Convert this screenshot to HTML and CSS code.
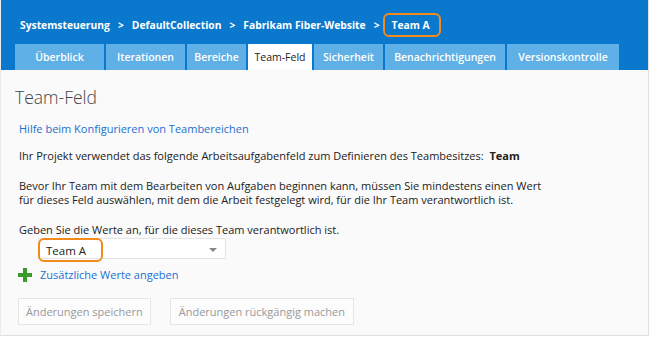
FILE: index.html
```html
<!DOCTYPE html>
<html lang="de">
<head>
  <meta charset="UTF-8">
  <title>Team-Feld</title>
  <link rel="stylesheet" href="styles.css">
</head>
<body>
  <div class="frame">
    <div class="header">
      <div class="breadcrumb">
        <span>Systemsteuerung</span>
        <span class="sep">&gt;</span>
        <span>DefaultCollection</span>
        <span class="sep">&gt;</span>
        <span>Fabrikam Fiber-Website</span>
        <span class="sep">&gt;</span>
        <span class="highlight crumb-team">Team A</span>
      </div>
      <div class="tabs">
        <div class="tab">Überblick</div>
        <div class="tab">Iterationen</div>
        <div class="tab">Bereiche</div>
        <div class="tab active">Team-Feld</div>
        <div class="tab">Sicherheit</div>
        <div class="tab">Benachrichtigungen</div>
        <div class="tab">Versionskontrolle</div>
      </div>
    </div>

    <div class="content">
      <h1 class="page-title">Team-Feld</h1>
      <a href="#" class="help-link">Hilfe beim Konfigurieren von Teambereichen</a>

      <p class="text">Ihr Projekt verwendet das folgende Arbeitsaufgabenfeld zum Definieren des Teambesitzes:&nbsp; <strong>Team</strong></p>

      <p class="text">Bevor Ihr Team mit dem Bearbeiten von Aufgaben beginnen kann, müssen Sie mindestens einen Wert<br>für dieses Feld auswählen, mit dem die Arbeit festgelegt wird, für die Ihr Team verantwortlich ist.</p>

      <p class="text label">Geben Sie die Werte an, für die dieses Team verantwortlich ist.</p>
      <div class="select">
        <span class="highlight select-value">Team A</span>
        <span class="arrow"></span>
      </div>

      <div class="add-row">
        <svg class="plus" width="14" height="14" viewBox="0 0 14 14">
          <rect x="5" y="0" width="4" height="14" fill="#3a9a2c"/>
          <rect x="0" y="5" width="14" height="4" fill="#3a9a2c"/>
        </svg>
        <a href="#" class="add-link">Zusätzliche Werte angeben</a>
      </div>

      <div class="buttons">
        <button class="btn">Änderungen speichern</button>
        <button class="btn">Änderungen rückgängig machen</button>
      </div>
    </div>
  </div>
</body>
</html>
```

FILE: styles.css
```css
* {
  margin: 0;
  padding: 0;
  box-sizing: border-box;
}

body {
  font-family: 'Open Sans', 'Noto Sans', sans-serif;
  background-color: #fff;
  width: 650px;
  height: 338px;
  overflow: hidden;
}

.frame {
  width: 649px;
  height: 336px;
  background-color: #fafafa;
  border-right: 1px solid #e0e0e0;
  border-bottom: 1px solid #e0e0e0;
  border-left: 1px solid #ececec;
}

.header {
  background-color: #0a78cd;
  height: 70px;
  padding: 0 0 0 14px;
  display: flex;
  flex-direction: column;
  justify-content: flex-end;
}

.breadcrumb {
  color: #fff;
  font-weight: bold;
  font-size: 10.3px;
  display: flex;
  align-items: center;
  padding-left: 5px;
  margin-bottom: 7px;
  height: 24px;
}

.breadcrumb .sep {
  margin: 0 8px;
}

.highlight {
  border: 2px solid #f28a1c;
  border-radius: 6px;
}

.crumb-team {
  padding: 3px 9px 3px 7px;
  margin-left: -5px;
}

.tabs {
  display: flex;
  gap: 2px;
  height: 26px;
}

.tab {
  background-color: #5eb0e6;
  color: #fff;
  font-size: 10.5px;
  font-weight: 600;
  display: flex;
  align-items: center;
  justify-content: center;
  white-space: nowrap;
}

.tab:nth-child(1) { width: 89px; }
.tab:nth-child(2) { width: 79px; }
.tab:nth-child(3) { width: 59px; }
.tab:nth-child(4) { width: 64px; }
.tab:nth-child(5) { width: 69px; }
.tab:nth-child(6) { width: 120px; }
.tab:nth-child(7) { width: 112px; }

.tab.active {
  background-color: #fff;
  color: #222;
  font-weight: normal;
}

.content {
  padding: 15px 0 0 14px;
  font-size: 11px;
  color: #222;
}

.page-title {
  font-size: 17.5px;
  font-weight: 300;
  color: #444;
  margin-bottom: 12px;
}

.help-link,
.add-link {
  color: #1d6fd2;
  text-decoration: none;
}

.help-link {
  display: block;
  margin-left: 4px;
  margin-bottom: 13px;
}

.text {
  margin-left: 4px;
  line-height: 14px;
  margin-bottom: 16px;
}

.text.label {
  margin-bottom: 1px;
}

.select {
  margin-left: 23px;
  width: 188px;
  height: 21px;
  background: #fff;
  border: 1px solid #e4e4e4;
  display: flex;
  align-items: center;
  justify-content: space-between;
  position: relative;
}

.select-value {
  position: absolute;
  left: -1px;
  top: -1px;
  width: 65px;
  height: 24px;
  padding: 3px 0 0 6px;
  font-size: 11.5px;
}

.arrow {
  position: absolute;
  right: 8px;
  top: 9px;
  border-left: 4px solid transparent;
  border-right: 4px solid transparent;
  border-top: 4px solid #888;
}

.add-row {
  display: flex;
  align-items: center;
  gap: 8px;
  margin: 8px 0 0 3px;
}

.buttons {
  display: flex;
  gap: 19px;
  margin: 16px 0 0 3px;
}

.btn {
  font-family: inherit;
  font-size: 11px;
  color: #999;
  background: #fcfcfc;
  border: 1px solid #e6e6e6;
  height: 27px;
  padding: 0 7px;
}

.btn:last-child {
  padding: 0 8px;
}
```
